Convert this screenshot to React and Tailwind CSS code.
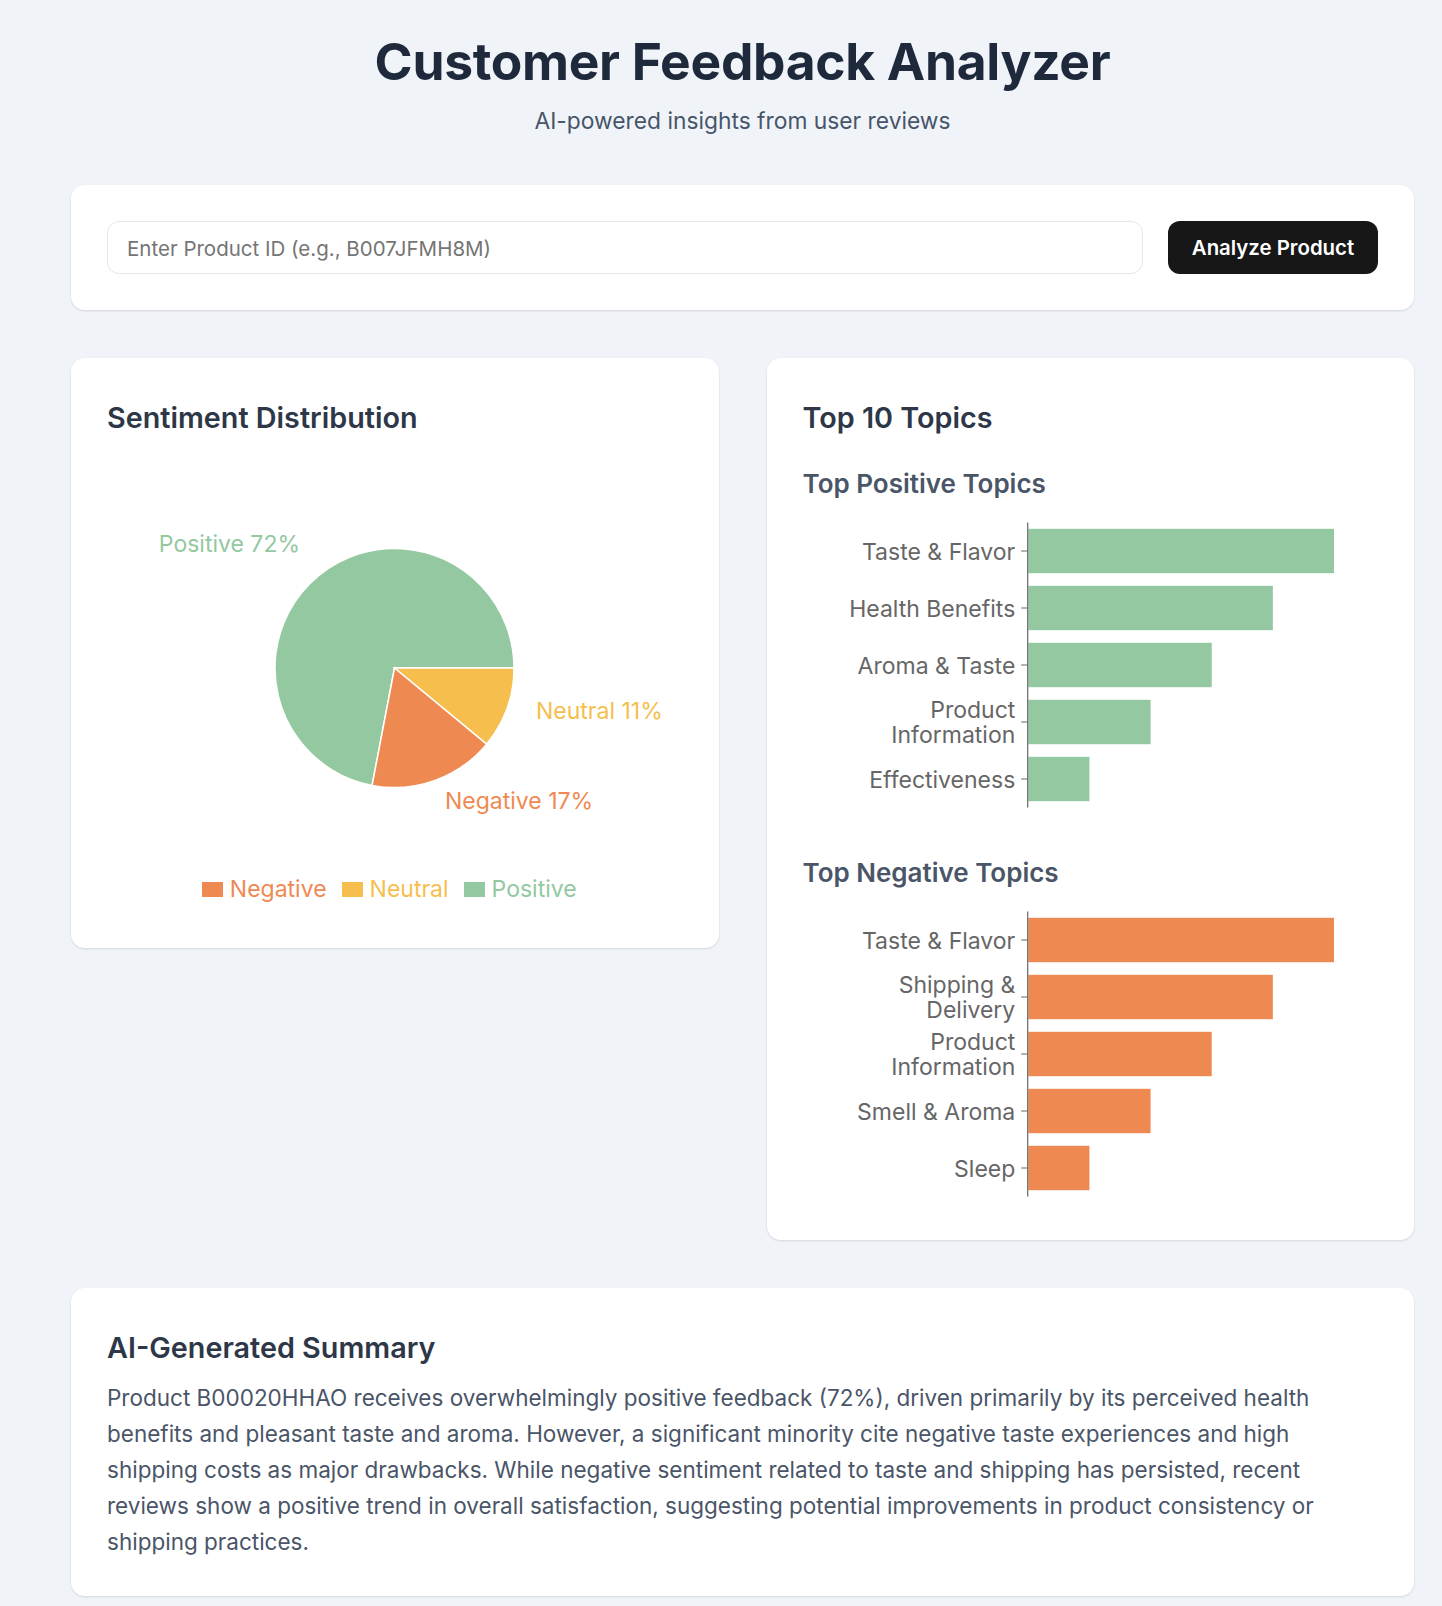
import React, { useState } from "react";

const COLORS = {
	positive: "#93c8a0",
	neutral: "#f5be4d",
	negative: "#ef8952",
};

const POSITIVE_TOPICS = [
	{ label: ["Taste & Flavor"], value: 5 },
	{ label: ["Health Benefits"], value: 4 },
	{ label: ["Aroma & Taste"], value: 3 },
	{ label: ["Product", "Information"], value: 2 },
	{ label: ["Effectiveness"], value: 1 },
];

const NEGATIVE_TOPICS = [
	{ label: ["Taste & Flavor"], value: 5 },
	{ label: ["Shipping &", "Delivery"], value: 4 },
	{ label: ["Product", "Information"], value: 3 },
	{ label: ["Smell & Aroma"], value: 2 },
	{ label: ["Sleep"], value: 1 },
];

const SUMMARY =
	"Product B00020HHAO receives overwhelmingly positive feedback (72%), driven primarily by its perceived health benefits and pleasant taste and aroma. However, a significant minority cite negative taste experiences and high shipping costs as major drawbacks. While negative sentiment related to taste and shipping has persisted, recent reviews show a positive trend in overall satisfaction, suggesting potential improvements in product consistency or shipping practices.";

const CARD =
	"bg-white rounded-[14px] shadow-[0_1px_3px_rgba(15,23,42,0.08),0_1px_2px_rgba(15,23,42,0.05)]";

// point on the pie, angle in degrees clockwise from 3 o'clock
const pt = (cx, cy, r, deg) => {
	const a = (deg * Math.PI) / 180;
	return [cx + r * Math.cos(a), cy + r * Math.sin(a)];
};

const slice = (cx, cy, r, from, to) => {
	const [x1, y1] = pt(cx, cy, r, from);
	const [x2, y2] = pt(cx, cy, r, to);
	const large = to - from > 180 ? 1 : 0;
	return `M${cx},${cy} L${x1},${y1} A${r},${r} 0 ${large} 1 ${x2},${y2} Z`;
};

const SentimentPie = () => {
	const cx = 287.5;
	const cy = 218;
	const r = 119.5;
	return (
		<svg width="576" height="424" className="block">
			<path d={slice(cx, cy, r, 100.8, 360)} fill={COLORS.positive} stroke="#fff" strokeWidth="1.5" />
			<path d={slice(cx, cy, r, 0, 39.6)} fill={COLORS.neutral} stroke="#fff" strokeWidth="1.5" />
			<path d={slice(cx, cy, r, 39.6, 100.8)} fill={COLORS.negative} stroke="#fff" strokeWidth="1.5" />
			<text x="193" y="94" textAnchor="end" dominantBaseline="central" fill={COLORS.positive} fontSize="23">
				Positive 72%
			</text>
			<text x="429" y="261" textAnchor="start" dominantBaseline="central" fill={COLORS.neutral} fontSize="23">
				Neutral 11%
			</text>
			<text x="338" y="351" textAnchor="start" dominantBaseline="central" fill={COLORS.negative} fontSize="23">
				Negative 17%
			</text>
		</svg>
	);
};

const TopicBars = ({ data, color }) => {
	const axisX = 224.7;
	const top = 8.5;
	const band = 57;
	const unit = 61.14;
	return (
		<svg width="576" height="300" className="block">
			{data.map((d, i) => {
				const mid = top + band * i + band / 2;
				return (
					<g key={i}>
						<rect x={axisX + 0.6} y={top + band * i + 6.3} width={d.value * unit} height="44.4" fill={color} />
						<line x1={axisX - 6.5} x2={axisX} y1={mid} y2={mid} stroke="#666" strokeWidth="1" />
						{d.label.length === 1 ? (
							<text x="212.3" y={mid} dy="0.38em" textAnchor="end" fill="#666" fontSize="23">
								{d.label[0]}
							</text>
						) : (
							d.label.map((l, j) => (
								<text
									key={j}
									x="212.3"
									y={mid + (j === 0 ? -12.5 : 12.5)}
									dy="0.36em"
									textAnchor="end"
									fill="#666"
									fontSize="23"
								>
									{l}
								</text>
							))
						)}
					</g>
				);
			})}
			<line x1={axisX} x2={axisX} y1={top} y2={top + band * data.length} stroke="#666" strokeWidth="1.2" />
		</svg>
	);
};

const LegendItem = ({ color, label }) => (
	<div className="flex items-center gap-[7px]">
		<span className="block w-[21px] h-[15px]" style={{ backgroundColor: color }} />
		<span className="text-[23px] leading-[30px]" style={{ color }}>
			{label}
		</span>
	</div>
);

const App = () => {
	const [productId, setProductId] = useState("");

	return (
		<div className="min-h-screen bg-[#f0f4f9] [font-family:Inter,'Noto_Sans',sans-serif] pl-[71px] pr-[28px] pt-[30px] pb-[12px]">
			{/* Header */}
			<h1 className="text-center text-[51.5px] leading-[63px] font-bold text-[#1e293b] tracking-[-0.3px]">
				Customer Feedback Analyzer
			</h1>
			<p className="mt-[12px] text-center text-[22.8px] leading-[32px] text-[#475569]">
				AI-powered insights from user reviews
			</p>

			{/* Search */}
			<div className={`${CARD} mt-[48px] p-9 flex gap-[25px]`}>
				<input
					value={productId}
					onChange={(e) => setProductId(e.target.value)}
					placeholder="Enter Product ID (e.g., B007JFMH8M)"
					className="flex-1 h-[53px] rounded-[12px] border border-[#e2e8f0] px-[19px] pt-[2px] text-[20.5px] text-[#1e293b] placeholder:text-[#757575] outline-none"
				/>
				<button className="w-[210px] h-[53px] rounded-[12px] bg-[#171717] text-white text-[20.4px] font-semibold pt-[2px]">
					Analyze Product
				</button>
			</div>

			{/* Charts */}
			<div className="mt-[48px] grid grid-cols-2 gap-[48px] items-start">
				<div className={`${CARD} px-9 pt-[38px] pb-[44px]`}>
					<h2 className="text-[28.75px] leading-[44px] font-semibold text-[#2d3748]">Sentiment Distribution</h2>
					<div className="mt-[10px]">
						<SentimentPie />
					</div>
					<div className="flex justify-center gap-[15px] pr-[11px]">
						<LegendItem color={COLORS.negative} label="Negative" />
						<LegendItem color={COLORS.neutral} label="Neutral" />
						<LegendItem color={COLORS.positive} label="Positive" />
					</div>
				</div>

				<div className={`${CARD} px-9 pt-[38px] pb-[37px]`}>
					<h2 className="text-[28.75px] leading-[44px] font-semibold text-[#2d3748]">Top 10 Topics</h2>
					<h3 className="mt-[26px] text-[26px] leading-[36px] font-semibold text-[#4a5568]">Top Positive Topics</h3>
					<div className="mt-[12px]">
						<TopicBars data={POSITIVE_TOPICS} color={COLORS.positive} />
					</div>
					<h3 className="mt-[41px] text-[26px] leading-[36px] font-semibold text-[#4a5568]">Top Negative Topics</h3>
					<div className="mt-[12px]">
						<TopicBars data={NEGATIVE_TOPICS} color={COLORS.negative} />
					</div>
				</div>
			</div>

			{/* Summary */}
			<div className={`${CARD} mt-[48px] px-9 pt-[38px] pb-9`}>
				<h2 className="text-[28.75px] leading-[44px] font-semibold text-[#2d3748]">AI-Generated Summary</h2>
				<p className="mt-[10px] text-[22.5px] leading-[36px] text-[#4a5568]">{SUMMARY}</p>
			</div>
		</div>
	);
};

export default App;
